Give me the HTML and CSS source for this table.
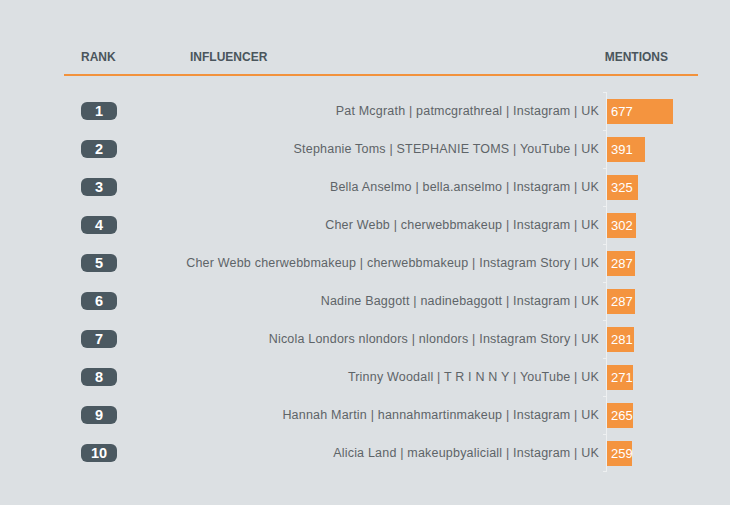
FILE: index.html
```html
<!DOCTYPE html>
<html>
<head>
<meta charset="utf-8">
<link rel="stylesheet" href="styles.css">
</head>
<body>
<div class="chart">
  <div class="head">
    <div class="h-rank">RANK</div>
    <div class="h-inf">INFLUENCER</div>
    <div class="h-men">MENTIONS</div>
  </div>
  <div class="rows">
    <div class="row"><span class="badge">1</span><span class="name">Pat Mcgrath | patmcgrathreal | Instagram | UK</span><div class="axis"><div class="bar" style="width:66px">677</div></div></div>
    <div class="row"><span class="badge">2</span><span class="name">Stephanie Toms | STEPHANIE TOMS | YouTube | UK</span><div class="axis"><div class="bar" style="width:38px">391</div></div></div>
    <div class="row"><span class="badge">3</span><span class="name">Bella Anselmo | bella.anselmo | Instagram | UK</span><div class="axis"><div class="bar" style="width:31px">325</div></div></div>
    <div class="row"><span class="badge">4</span><span class="name">Cher Webb | cherwebbmakeup | Instagram | UK</span><div class="axis"><div class="bar" style="width:29px">302</div></div></div>
    <div class="row"><span class="badge">5</span><span class="name">Cher Webb cherwebbmakeup | cherwebbmakeup | Instagram Story | UK</span><div class="axis"><div class="bar" style="width:28px">287</div></div></div>
    <div class="row"><span class="badge">6</span><span class="name">Nadine Baggott | nadinebaggott | Instagram | UK</span><div class="axis"><div class="bar" style="width:28px">287</div></div></div>
    <div class="row"><span class="badge">7</span><span class="name">Nicola Londors nlondors | nlondors | Instagram Story | UK</span><div class="axis"><div class="bar" style="width:27px">281</div></div></div>
    <div class="row"><span class="badge">8</span><span class="name">Trinny Woodall | T R I N N Y | YouTube | UK</span><div class="axis"><div class="bar" style="width:26px">271</div></div></div>
    <div class="row"><span class="badge">9</span><span class="name">Hannah Martin | hannahmartinmakeup | Instagram | UK</span><div class="axis"><div class="bar" style="width:26px">265</div></div></div>
    <div class="row last"><span class="badge">10</span><span class="name">Alicia Land | makeupbyaliciall | Instagram | UK</span><div class="axis"><div class="bar" style="width:25px">259</div></div></div>
  </div>
</div>
</body>
</html>
```
FILE: styles.css
```css
html, body {
  margin: 0;
  padding: 0;
  background: #dce0e3;
}
body {
  width: 730px;
  height: 505px;
  overflow: hidden;
  font-family: "Liberation Sans", Arial, sans-serif;
}
.chart {
  margin-left: 64px;
  width: 634px;
  padding-top: 47px;
}
.head {
  display: flex;
  align-items: center;
  height: 20px;
  padding-bottom: 7px;
  border-bottom: 2px solid #f2923c;
  color: #4a555c;
  font-weight: bold;
  font-size: 12px;
  line-height: 20px;
}
.h-rank {
  padding-left: 17px;
  width: 109px;
}
.h-inf {
  flex: 1;
}
.h-men {
  padding-right: 30px;
}
.rows {
  margin-top: 16px;
}
.row {
  display: flex;
  align-items: center;
  height: 38px;
  padding-left: 17px;
}
.badge {
  width: 36px;
  height: 18px;
  border-radius: 6px;
  background: #4b5961;
  color: #fff;
  font-weight: bold;
  font-size: 14.5px;
  line-height: 18px;
  text-align: center;
  flex: none;
}
.name {
  flex: 1;
  text-align: right;
  padding-right: 7px;
  font-size: 12.5px;
  letter-spacing: 0.2px;
  color: #5e6468;
  white-space: nowrap;
}
.axis {
  position: relative;
  width: 91px;
  height: 38px;
  border-left: 1px solid #eef0f1;
  display: flex;
  align-items: center;
  flex: none;
}
.axis::before {
  content: "";
  position: absolute;
  left: -4px;
  top: 0;
  width: 3px;
  height: 1px;
  background: #eef0f1;
}
.row.last .axis::after {
  content: "";
  position: absolute;
  left: -4px;
  bottom: 0;
  width: 3px;
  height: 1px;
  background: #eef0f1;
}
.bar {
  height: 25px;
  background: #f4943f;
  color: #fff;
  font-size: 13px;
  line-height: 25px;
  padding-left: 4px;
  box-sizing: border-box;
  white-space: nowrap;
}
```
